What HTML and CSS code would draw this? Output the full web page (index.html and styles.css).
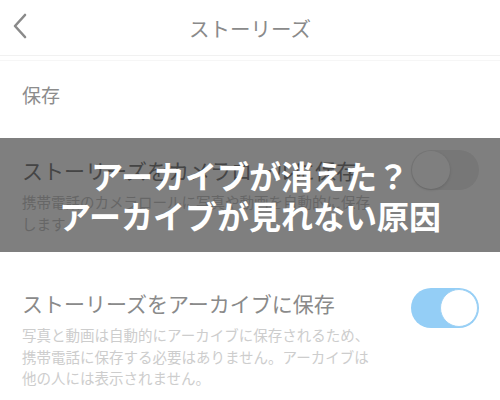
FILE: index.html
```html
<!DOCTYPE html>
<html lang="ja">
<head>
  <meta charset="UTF-8">
  <meta name="viewport" content="width=device-width, initial-scale=1.0">
  <title>ストーリーズ</title>
  <link rel="stylesheet" href="styles.css">
</head>
<body>
  <div class="screen">
    <header class="topbar">
      <svg class="back" width="16" height="26" viewBox="0 0 16 26">
        <path d="M13 2 L3 13 L13 24" fill="none" stroke="#8a8a8a" stroke-width="2.6" stroke-linecap="round" stroke-linejoin="round"/>
      </svg>
      <h1 class="topbar-title">ストーリーズ</h1>
    </header>

    <div class="settings">
      <div class="section-label">保存</div>

      <div class="row">
        <div class="row-text">
          <div class="row-title">ストーリーズをカメラロールに保存</div>
          <div class="row-desc">携帯電話のカメラロールに写真や動画を自動的に保存します</div>
        </div>
        <div class="toggle toggle-off"><span class="knob"></span></div>
      </div>

      <div class="row">
        <div class="row-text">
          <div class="row-title">ストーリーズをアーカイブに保存</div>
          <div class="row-desc">写真と動画は自動的にアーカイブに保存されるため、携帯電話に保存する必要はありません。アーカイブは他の人には表示されません。</div>
        </div>
        <div class="toggle toggle-on"><span class="knob"></span></div>
      </div>
    </div>

    <div class="banner">
      <p>アーカイブが消えた？</p>
      <p>アーカイブが見れない原因</p>
    </div>
  </div>
</body>
</html>
```

FILE: styles.css
```css
body {
  margin: 0;
  background: #ffffff;
  font-family: "Noto Sans CJK JP", "Noto Sans", sans-serif;
  color: #888888;
}
.screen {
  position: relative;
  width: 500px;
  height: 400px;
  overflow: hidden;
}
.topbar {
  position: relative;
  height: 55px;
  display: flex;
  align-items: center;
  justify-content: center;
  border-bottom: 1px solid #f1f1f1;
}
.back {
  position: absolute;
  left: 12px;
  top: 13px;
}
.topbar-title {
  margin: 0;
  font-size: 20.5px;
  font-weight: 400;
  line-height: 26px;
  color: #8a8a8a;
}
.settings {
  margin-top: 4px;
  border-top: 1px solid #f6f6f6;
}
.section-label {
  padding: 21px 22px;
  font-size: 19px;
  line-height: 26px;
  color: #8c8c8c;
}
.row {
  display: flex;
  align-items: flex-start;
  justify-content: space-between;
  padding: 28px 21px 28px 22px;
}
.row-text {
  width: 356px;
}
.row-title {
  font-size: 21px;
  line-height: 26px;
  color: #8a8a8a;
}
.row-desc {
  margin-top: 8px;
  font-size: 14.5px;
  line-height: 21.5px;
  color: #cdcdcd;
}
.toggle {
  display: flex;
  align-items: center;
  box-sizing: border-box;
  width: 68px;
  height: 40px;
  padding: 1px;
  border-radius: 20px;
}
.knob {
  box-sizing: border-box;
  width: 38px;
  height: 38px;
  border-radius: 50%;
  background: #ffffff;
}
.toggle-on {
  margin-top: -2px;
  justify-content: flex-end;
  background: #94cef6;
}
.toggle-on .knob {
  border: 1.5px solid #9fd2f5;
}
.toggle-off {
  margin-top: -7px;
  justify-content: flex-start;
  background: #eeeeee;
}
.toggle-off .knob {
  box-shadow: 0 1px 3px rgba(0, 0, 0, 0.15);
}
.banner {
  position: absolute;
  left: 0;
  right: 0;
  top: 138px;
  height: 114px;
  display: flex;
  flex-direction: column;
  justify-content: center;
  align-items: center;
  background: rgba(0, 0, 0, 0.5);
}
.banner p {
  margin: 0;
  font-size: 32px;
  font-weight: 700;
  line-height: 40px;
  color: #ffffff;
}
```
